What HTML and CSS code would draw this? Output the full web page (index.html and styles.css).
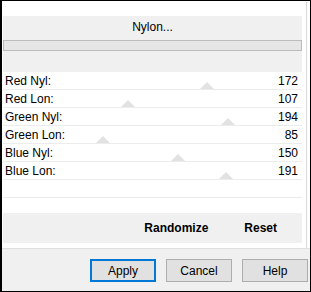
FILE: index.html
```html
<!doctype html>
<html lang="en">
    <head>
        <meta charset="UTF-8" />
        <title>Nylon</title>
        <link rel="stylesheet" href="styles.css">
    </head>
    <body>
        <div class="window">
            <div class="upper">
                <div class="content">
                    <div class="head">
                        <div class="title">Nylon...</div>
                        <div class="bar"></div>
                    </div>
                    <div class="rows">
                        <div class="row"><span>Red Nyl:</span><span>172</span><i class="thumb" style="left: 197px"></i></div>
                        <div class="row"><span>Red Lon:</span><span>107</span><i class="thumb" style="left: 118px"></i></div>
                        <div class="row"><span>Green Nyl:</span><span>194</span><i class="thumb" style="left: 218px"></i></div>
                        <div class="row"><span>Green Lon:</span><span>85</span><i class="thumb" style="left: 93px"></i></div>
                        <div class="row"><span>Blue Nyl:</span><span>150</span><i class="thumb" style="left: 168px"></i></div>
                        <div class="row"><span>Blue Lon:</span><span>191</span><i class="thumb" style="left: 216px"></i></div>
                    </div>
                    <div class="spacer"></div>
                    <div class="actions">
                        <span>Randomize</span>
                        <span>Reset</span>
                    </div>
                </div>
                <div class="rail"></div>
            </div>
            <div class="footer">
                <button class="btn focused">Apply</button>
                <button class="btn">Cancel</button>
                <button class="btn">Help</button>
            </div>
        </div>
    </body>
</html>
```

FILE: styles.css
```css
body {
    margin: 0;
    background-color: white;
    font-family: "Liberation Sans", Arial, sans-serif;
    font-size: 12px;
    color: black;
}

.window {
    width: 311px;
    height: 292px;
    box-sizing: border-box;
    border: 1px solid black;
    border-left-width: 2px;
    display: flex;
    flex-direction: column;
    background-color: white;
}

.upper {
    display: flex;
    height: 247px;
    flex-shrink: 0;
}

.content {
    width: 299px;
    margin-left: 1px;
    padding-top: 15px;
    display: flex;
    flex-direction: column;
}

.content > * {
    flex-shrink: 0;
}

.rail {
    width: 3px;
    margin-left: 1px;
    margin-top: 1px;
    border-right: 1px solid #dadada;
}

.head {
    background-color: #f0f0f0;
    height: 56px;
    display: flex;
    flex-direction: column;
}

.title {
    height: 23px;
    line-height: 23px;
    text-align: center;
}

.bar {
    margin-top: 1px;
    height: 11px;
    box-sizing: border-box;
    border: 1px solid #bcbcbc;
    background-color: #e6e6e6;
}

.row {
    position: relative;
    height: 18px;
    box-sizing: border-box;
    border-bottom: 1px solid #ececec;
    padding: 0 4px 0 2px;
    display: flex;
    justify-content: space-between;
    align-items: center;
}

.row span {
    position: relative;
    z-index: 1;
}

.thumb {
    position: absolute;
    bottom: 0;
    width: 0;
    height: 0;
    border-left: 7px solid transparent;
    border-right: 7px solid transparent;
    border-bottom: 7px solid #e2e2e2;
}

.spacer {
    height: 18px;
    box-sizing: border-box;
    border-bottom: 1px solid #ececec;
}

.actions {
    margin-top: 15px;
    height: 30px;
    background-color: #f0f0f0;
    display: flex;
    justify-content: flex-end;
    align-items: center;
    gap: 36px;
    padding-right: 25px;
    font-weight: bold;
}

.footer {
    flex: 1;
    background-color: #f0f0f0;
    border-top: 1px solid #dfdfdf;
    display: flex;
    justify-content: flex-end;
    align-items: flex-start;
    gap: 10px;
    padding: 10px 2px 0 0;
}

.btn {
    width: 66px;
    height: 23px;
    box-sizing: border-box;
    border: 1px solid #adadad;
    background-color: #e1e1e1;
    font-family: "Liberation Sans", Arial, sans-serif;
    font-size: 12px;
    color: black;
    padding: 0;
}

.btn.focused {
    border: 2px solid #0078d7;
}
```
